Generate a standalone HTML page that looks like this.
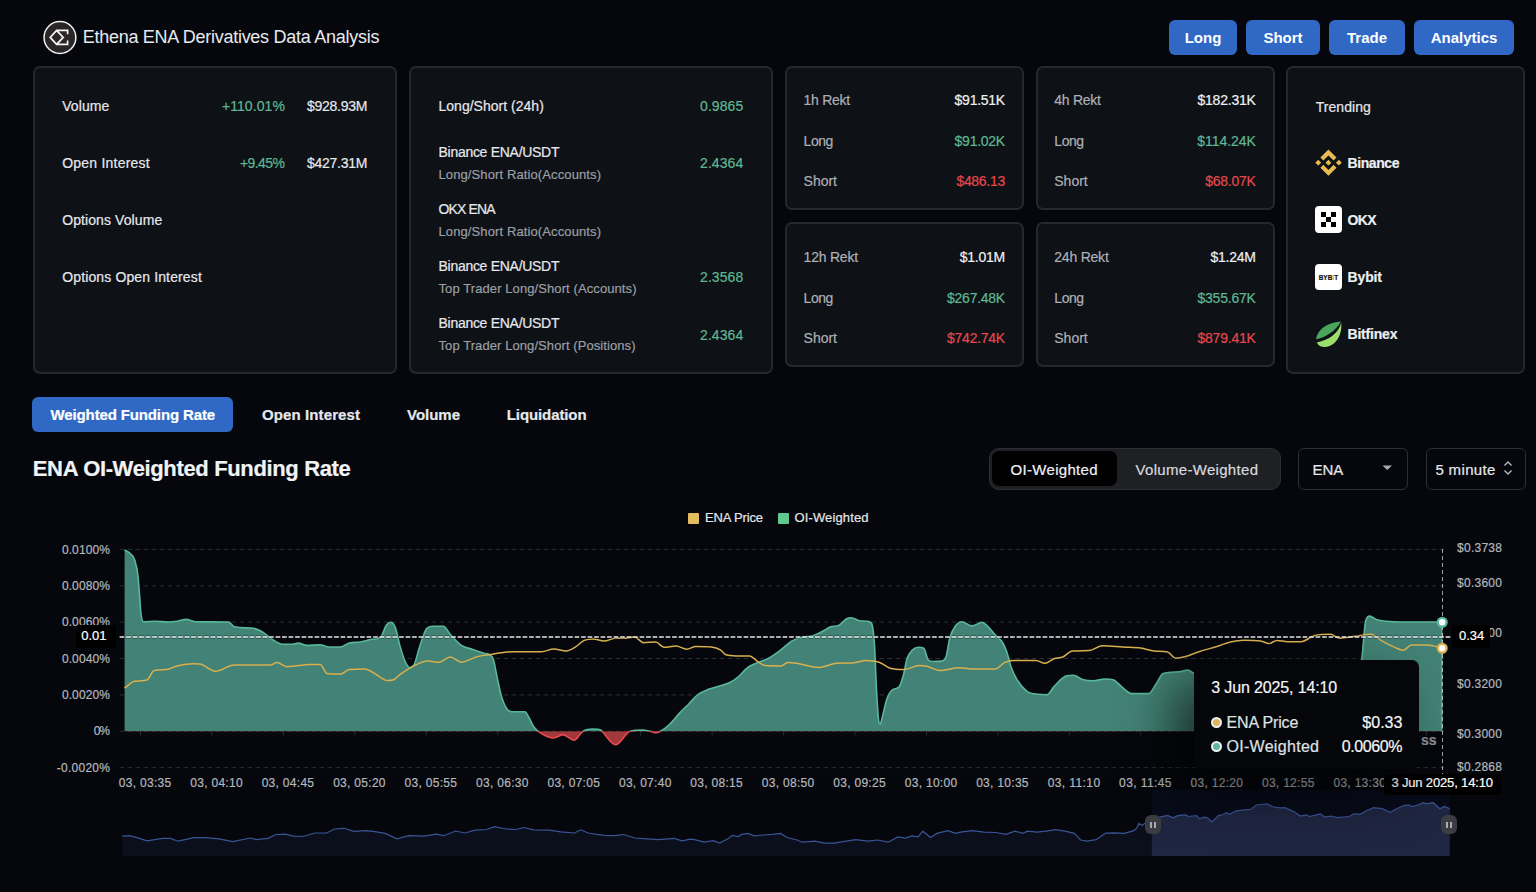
<!DOCTYPE html>
<html><head><meta charset="utf-8"><title>Ethena ENA Derivatives Data Analysis</title>
<style>
html,body{margin:0;padding:0;}
body{width:1536px;height:892px;background:#05070c;position:relative;overflow:hidden;font-family:"Liberation Sans", sans-serif;}
.t{position:absolute;white-space:nowrap;line-height:1;-webkit-text-stroke:0.2px currentColor;}
.card{position:absolute;background:#0e1116;border:2px solid #25282e;border-radius:7px;}
.btn{position:absolute;background:#3068c6;border-radius:6px;color:#fff;font-weight:700;font-size:15px;line-height:35px;text-align:center;}
</style></head><body>
<svg style="position:absolute;left:42px;top:20px" width="36" height="36" viewBox="0 0 36 36">
<circle cx="17.95" cy="17.5" r="15.9" fill="#2a2627" stroke="#f0f0f0" stroke-width="1.5"/>
<path d="M25.6 14.3 V10.4 H14.6 L8.2 17.4 L14.6 24.4 H25.6 V20.5 M14.6 10.4 L21.2 17.4 L14.6 24.4" fill="none" stroke="#f4f4f4" stroke-width="1.7" stroke-linejoin="miter"/>
</svg>
<div class="t" style="top:28.2px;font-size:18px;color:#e8eaef;letter-spacing:-0.270px;left:82.7px;-webkit-text-stroke:0;"><span>Ethena ENA Derivatives Data Analysis</span></div>
<div class="btn" style="left:1169px;top:20px;width:68px;height:35px;">Long</div>
<div class="btn" style="left:1246px;top:20px;width:74px;height:35px;">Short</div>
<div class="btn" style="left:1329px;top:20px;width:76px;height:35px;">Trade</div>
<div class="btn" style="left:1414px;top:20px;width:100px;height:35px;">Analytics</div>
<div class="card" style="left:33px;top:66px;width:360px;height:304px;"></div>
<div class="card" style="left:409px;top:66px;width:360px;height:304px;"></div>
<div class="card" style="left:785px;top:66px;width:235px;height:140px;"></div>
<div class="card" style="left:1036px;top:66px;width:235px;height:140px;"></div>
<div class="card" style="left:785px;top:222px;width:235px;height:141px;"></div>
<div class="card" style="left:1036px;top:222px;width:235px;height:141px;"></div>
<div class="card" style="left:1286px;top:66px;width:235px;height:304px;"></div>
<div class="t" style="top:98.9px;font-size:14px;color:#e6e8ec;letter-spacing:0.079px;left:62.2px;"><span>Volume</span></div>
<div class="t" style="top:155.9px;font-size:14px;color:#e6e8ec;letter-spacing:0.223px;left:62.2px;"><span>Open Interest</span></div>
<div class="t" style="top:212.9px;font-size:14px;color:#e6e8ec;letter-spacing:0.089px;left:62.2px;"><span>Options Volume</span></div>
<div class="t" style="top:269.7px;font-size:14px;color:#e6e8ec;letter-spacing:0.132px;left:62.2px;"><span>Options Open Interest</span></div>
<div class="t" style="top:98.9px;font-size:14px;color:#5fb893;letter-spacing:0.085px;right:1251.0px;text-align:right;"><span>+110.01%</span></div>
<div class="t" style="top:98.9px;font-size:14px;color:#e6e8ec;letter-spacing:-0.269px;right:1168.9px;text-align:right;"><span>$928.93M</span></div>
<div class="t" style="top:155.9px;font-size:14px;color:#5fb893;letter-spacing:-0.575px;right:1251.7px;text-align:right;"><span>+9.45%</span></div>
<div class="t" style="top:155.9px;font-size:14px;color:#e6e8ec;letter-spacing:-0.269px;right:1168.9px;text-align:right;"><span>$427.31M</span></div>
<div class="t" style="top:99.4px;font-size:14px;color:#e6e8ec;letter-spacing:0.015px;left:438.5px;"><span>Long/Short (24h)</span></div>
<div class="t" style="top:99.4px;font-size:14px;color:#5fb893;letter-spacing:0.074px;right:792.7px;text-align:right;"><span>0.9865</span></div>
<div class="t" style="top:145.0px;font-size:14px;color:#e6e8ec;letter-spacing:-0.285px;left:438.5px;"><span>Binance ENA/USDT</span></div>
<div class="t" style="top:168.0px;font-size:13px;color:#9c9fa4;letter-spacing:0.112px;left:438.5px;"><span>Long/Short Ratio(Accounts)</span></div>
<div class="t" style="top:156.1px;font-size:14px;color:#5fb893;letter-spacing:0.074px;right:792.7px;text-align:right;"><span>2.4364</span></div>
<div class="t" style="top:201.7px;font-size:14px;color:#e6e8ec;letter-spacing:-0.875px;left:438.5px;"><span>OKX ENA</span></div>
<div class="t" style="top:225.0px;font-size:13px;color:#9c9fa4;letter-spacing:0.112px;left:438.5px;"><span>Long/Short Ratio(Accounts)</span></div>
<div class="t" style="top:259.4px;font-size:14px;color:#e6e8ec;letter-spacing:-0.285px;left:438.5px;"><span>Binance ENA/USDT</span></div>
<div class="t" style="top:282.4px;font-size:13px;color:#9c9fa4;letter-spacing:0.093px;left:438.5px;"><span>Top Trader Long/Short (Accounts)</span></div>
<div class="t" style="top:270.3px;font-size:14px;color:#5fb893;letter-spacing:0.074px;right:792.7px;text-align:right;"><span>2.3568</span></div>
<div class="t" style="top:316.1px;font-size:14px;color:#e6e8ec;letter-spacing:-0.285px;left:438.5px;"><span>Binance ENA/USDT</span></div>
<div class="t" style="top:339.0px;font-size:13px;color:#9c9fa4;letter-spacing:0.082px;left:438.5px;"><span>Top Trader Long/Short (Positions)</span></div>
<div class="t" style="top:327.6px;font-size:14px;color:#5fb893;letter-spacing:0.074px;right:792.7px;text-align:right;"><span>2.4364</span></div>
<div class="t" style="top:92.8px;font-size:14px;color:#adb0b5;letter-spacing:-0.275px;left:803.6px;"><span>1h Rekt</span></div>
<div class="t" style="top:92.8px;font-size:14px;color:#f0f1f3;letter-spacing:-0.262px;right:531.1px;text-align:right;"><span>$91.51K</span></div>
<div class="t" style="top:133.6px;font-size:14px;color:#adb0b5;letter-spacing:-0.452px;left:803.6px;"><span>Long</span></div>
<div class="t" style="top:133.6px;font-size:14px;color:#5fb893;letter-spacing:-0.262px;right:531.1px;text-align:right;"><span>$91.02K</span></div>
<div class="t" style="top:174.3px;font-size:14px;color:#adb0b5;letter-spacing:-0.017px;left:803.6px;"><span>Short</span></div>
<div class="t" style="top:174.3px;font-size:14px;color:#e5484d;letter-spacing:-0.302px;right:531.1px;text-align:right;"><span>$486.13</span></div>
<div class="t" style="top:92.8px;font-size:14px;color:#adb0b5;letter-spacing:-0.275px;left:1054.3px;"><span>4h Rekt</span></div>
<div class="t" style="top:92.8px;font-size:14px;color:#f0f1f3;letter-spacing:-0.208px;right:280.3px;text-align:right;"><span>$182.31K</span></div>
<div class="t" style="top:133.6px;font-size:14px;color:#adb0b5;letter-spacing:-0.452px;left:1054.3px;"><span>Long</span></div>
<div class="t" style="top:133.6px;font-size:14px;color:#5fb893;letter-spacing:-0.058px;right:280.2px;text-align:right;"><span>$114.24K</span></div>
<div class="t" style="top:174.3px;font-size:14px;color:#adb0b5;letter-spacing:-0.017px;left:1054.3px;"><span>Short</span></div>
<div class="t" style="top:174.3px;font-size:14px;color:#e5484d;letter-spacing:-0.262px;right:280.4px;text-align:right;"><span>$68.07K</span></div>
<div class="t" style="top:249.9px;font-size:14px;color:#adb0b5;letter-spacing:-0.221px;left:803.6px;"><span>12h Rekt</span></div>
<div class="t" style="top:249.9px;font-size:14px;color:#f0f1f3;letter-spacing:-0.241px;right:531.0px;text-align:right;"><span>$1.01M</span></div>
<div class="t" style="top:290.7px;font-size:14px;color:#adb0b5;letter-spacing:-0.452px;left:803.6px;"><span>Long</span></div>
<div class="t" style="top:290.7px;font-size:14px;color:#5fb893;letter-spacing:-0.265px;right:531.1px;text-align:right;"><span>$267.48K</span></div>
<div class="t" style="top:331.4px;font-size:14px;color:#adb0b5;letter-spacing:-0.017px;left:803.6px;"><span>Short</span></div>
<div class="t" style="top:331.4px;font-size:14px;color:#e5484d;letter-spacing:-0.265px;right:531.1px;text-align:right;"><span>$742.74K</span></div>
<div class="t" style="top:249.9px;font-size:14px;color:#adb0b5;letter-spacing:-0.221px;left:1054.3px;"><span>24h Rekt</span></div>
<div class="t" style="top:249.9px;font-size:14px;color:#f0f1f3;letter-spacing:-0.241px;right:280.3px;text-align:right;"><span>$1.24M</span></div>
<div class="t" style="top:290.7px;font-size:14px;color:#adb0b5;letter-spacing:-0.452px;left:1054.3px;"><span>Long</span></div>
<div class="t" style="top:290.7px;font-size:14px;color:#5fb893;letter-spacing:-0.208px;right:280.3px;text-align:right;"><span>$355.67K</span></div>
<div class="t" style="top:331.4px;font-size:14px;color:#adb0b5;letter-spacing:-0.017px;left:1054.3px;"><span>Short</span></div>
<div class="t" style="top:331.4px;font-size:14px;color:#e5484d;letter-spacing:-0.208px;right:280.3px;text-align:right;"><span>$879.41K</span></div>
<div class="t" style="top:99.6px;font-size:14px;color:#e6e8ec;letter-spacing:0.064px;left:1315.7px;"><span>Trending</span></div>
<svg style="position:absolute;left:1310px;top:145px" width="40" height="36" viewBox="0 0 40 36">
<g fill="#e9bb4f">
<path d="M18.45 4.5 L26.5 12.56 L23.56 15.5 L18.45 10.4 L13.35 15.5 L10.4 12.56 Z"/>
<path d="M18.45 30.83 L26.5 22.77 L23.56 19.84 L18.45 24.94 L13.35 19.84 L10.4 22.77 Z"/>
<path d="M18.45 14.7 L21.4 17.67 L18.45 20.6 L15.5 17.67 Z"/>
<path d="M8.25 14.7 L11.2 17.67 L8.25 20.6 L5.3 17.67 Z"/>
<path d="M28.86 14.7 L31.8 17.67 L28.86 20.6 L25.9 17.67 Z"/>
</g></svg>
<div style="position:absolute;left:1315px;top:206px;width:27px;height:27px;background:#fff;border-radius:4px;"></div>
<svg style="position:absolute;left:1315px;top:206px" width="27" height="27" viewBox="0 0 27 27"><g fill="#000">
<rect x="6" y="6" width="5" height="5"/><rect x="16" y="6" width="5" height="5"/><rect x="11" y="11" width="5" height="5"/><rect x="6" y="16" width="5" height="5"/><rect x="16" y="16" width="5" height="5"/></g></svg>
<div style="position:absolute;left:1315px;top:263.5px;width:27px;height:26.5px;background:#fff;border-radius:4px;"></div>
<div class="t" style="left:1315px;top:275.4px;width:27px;text-align:center;font-size:6.4px;font-weight:700;color:#111;letter-spacing:0.1px">BYB<span style="color:#f7a600">I</span>T</div>
<svg style="position:absolute;left:1315px;top:320px" width="28" height="28" viewBox="0 0 28 28">
<path d="M25.9 1.4 C17 2 3.5 6 0.9 19.2 C10 17.5 21 11 25.9 1.4 Z" fill="#4aa65a"/>
<path d="M26.2 2.6 C24 13 14 20.5 1.9 22.4 C3 25.5 6.5 27.1 10.5 27 C20 26.5 27.5 16 26.2 2.6 Z" fill="#9ddd6c"/>
</svg>
<div class="t" style="top:156.1px;font-size:14px;color:#eceef1;font-weight:700;letter-spacing:-0.411px;left:1347.5px;"><span>Binance</span></div>
<div class="t" style="top:212.9px;font-size:14px;color:#eceef1;font-weight:700;letter-spacing:-0.672px;left:1347.5px;"><span>OKX</span></div>
<div class="t" style="top:270.1px;font-size:14px;color:#eceef1;font-weight:700;letter-spacing:-0.125px;left:1347.5px;"><span>Bybit</span></div>
<div class="t" style="top:327.1px;font-size:14px;color:#eceef1;font-weight:700;letter-spacing:-0.192px;left:1347.5px;"><span>Bitfinex</span></div>
<div style="position:absolute;left:32px;top:397px;width:201px;height:35px;background:#3068c6;border-radius:6px;"></div>
<div class="t" style="top:407.3px;font-size:15px;color:#fff;font-weight:700;letter-spacing:-0.136px;left:50.6px;"><span>Weighted Funding Rate</span></div>
<div class="t" style="top:407.3px;font-size:15px;color:#e6e8ec;font-weight:700;letter-spacing:0.109px;left:262.0px;"><span>Open Interest</span></div>
<div class="t" style="top:407.3px;font-size:15px;color:#e6e8ec;font-weight:700;letter-spacing:-0.016px;left:407.0px;"><span>Volume</span></div>
<div class="t" style="top:407.3px;font-size:15px;color:#e6e8ec;font-weight:700;letter-spacing:-0.103px;left:506.8px;"><span>Liquidation</span></div>
<div class="t" style="top:458.0px;font-size:22px;color:#f2f3f5;font-weight:700;letter-spacing:-0.354px;left:32.8px;"><span>ENA OI-Weighted Funding Rate</span></div>
<div style="position:absolute;left:989px;top:447.5px;width:290px;height:40px;background:#1e2024;border:1px solid #2c2e33;border-radius:10px;"></div>
<div style="position:absolute;left:992px;top:450.5px;width:125px;height:35.5px;background:#000;border-radius:7px;"></div>
<div style="position:absolute;left:1298px;top:447.5px;width:108px;height:40px;border:1px solid #2c2e33;border-radius:6px;"></div>
<div style="position:absolute;left:1426px;top:447.5px;width:98px;height:40px;border:1px solid #2c2e33;border-radius:6px;"></div>
<svg style="position:absolute;left:1382px;top:465px" width="11" height="6"><path d="M0.5 0.5 L10 0.5 L5.25 5 Z" fill="#a9abb0"/></svg>
<svg style="position:absolute;left:1503px;top:460px" width="10" height="16"><path d="M1.5 5.5 L5 2 L8.5 5.5 M1.5 10.5 L5 14 L8.5 10.5" fill="none" stroke="#b7b9bd" stroke-width="1.4"/></svg>
<div class="t" style="top:461.5px;font-size:15px;color:#eef0f2;letter-spacing:0.306px;left:1010.6px;"><span>OI-Weighted</span></div>
<div class="t" style="top:461.5px;font-size:15px;color:#d8dade;letter-spacing:0.312px;left:1135.5px;"><span>Volume-Weighted</span></div>
<div class="t" style="top:461.5px;font-size:15px;color:#e6e8ec;left:1312.5px;"><span>ENA</span></div>
<div class="t" style="top:461.5px;font-size:15px;color:#e6e8ec;letter-spacing:0.350px;left:1435.4px;"><span>5 minute</span></div>
<div style="position:absolute;left:688px;top:513px;width:11px;height:11px;background:#e3bc5c;border-radius:1px"></div>
<div style="position:absolute;left:777.7px;top:513px;width:11px;height:11px;background:#5ec88e;border-radius:1px"></div>
<div class="t" style="top:511.2px;font-size:13px;color:#e4e6ea;letter-spacing:-0.156px;left:705.1px;"><span>ENA Price</span></div>
<div class="t" style="top:511.2px;font-size:13px;color:#e4e6ea;letter-spacing:0.125px;left:794.5px;"><span>OI-Weighted</span></div>
<svg style="position:absolute;left:0;top:0" width="1536" height="892" viewBox="0 0 1536 892"><defs><clipPath id="cpos"><rect x="0" y="0" width="1536" height="731.3"/></clipPath><clipPath id="cneg"><rect x="0" y="731.3" width="1536" height="200"/></clipPath></defs><line x1="119.5" y1="549.4" x2="1447" y2="549.4" stroke="#2b2e34" stroke-width="1" stroke-dasharray="4.5 3.5"/><line x1="119.5" y1="585.8" x2="1447" y2="585.8" stroke="#2b2e34" stroke-width="1" stroke-dasharray="4.5 3.5"/><line x1="119.5" y1="622.1" x2="1447" y2="622.1" stroke="#2b2e34" stroke-width="1" stroke-dasharray="4.5 3.5"/><line x1="119.5" y1="658.5" x2="1447" y2="658.5" stroke="#2b2e34" stroke-width="1" stroke-dasharray="4.5 3.5"/><line x1="119.5" y1="694.9" x2="1447" y2="694.9" stroke="#2b2e34" stroke-width="1" stroke-dasharray="4.5 3.5"/><line x1="119.5" y1="731.3" x2="1447" y2="731.3" stroke="#2b2e34" stroke-width="1" stroke-dasharray="4.5 3.5"/><line x1="119.5" y1="767.6" x2="1447" y2="767.6" stroke="#2b2e34" stroke-width="1" stroke-dasharray="4.5 3.5"/><line x1="140.5" y1="731" x2="140.5" y2="735.5" stroke="#2a2d33" stroke-width="1"/><line x1="211.9" y1="731" x2="211.9" y2="735.5" stroke="#2a2d33" stroke-width="1"/><line x1="283.4" y1="731" x2="283.4" y2="735.5" stroke="#2a2d33" stroke-width="1"/><line x1="354.9" y1="731" x2="354.9" y2="735.5" stroke="#2a2d33" stroke-width="1"/><line x1="426.3" y1="731" x2="426.3" y2="735.5" stroke="#2a2d33" stroke-width="1"/><line x1="497.8" y1="731" x2="497.8" y2="735.5" stroke="#2a2d33" stroke-width="1"/><line x1="569.2" y1="731" x2="569.2" y2="735.5" stroke="#2a2d33" stroke-width="1"/><line x1="640.7" y1="731" x2="640.7" y2="735.5" stroke="#2a2d33" stroke-width="1"/><line x1="712.1" y1="731" x2="712.1" y2="735.5" stroke="#2a2d33" stroke-width="1"/><line x1="783.6" y1="731" x2="783.6" y2="735.5" stroke="#2a2d33" stroke-width="1"/><line x1="855.0" y1="731" x2="855.0" y2="735.5" stroke="#2a2d33" stroke-width="1"/><line x1="926.5" y1="731" x2="926.5" y2="735.5" stroke="#2a2d33" stroke-width="1"/><line x1="997.9" y1="731" x2="997.9" y2="735.5" stroke="#2a2d33" stroke-width="1"/><line x1="1069.3" y1="731" x2="1069.3" y2="735.5" stroke="#2a2d33" stroke-width="1"/><line x1="1140.8" y1="731" x2="1140.8" y2="735.5" stroke="#2a2d33" stroke-width="1"/><line x1="1212.2" y1="731" x2="1212.2" y2="735.5" stroke="#2a2d33" stroke-width="1"/><line x1="1283.7" y1="731" x2="1283.7" y2="735.5" stroke="#2a2d33" stroke-width="1"/><line x1="1355.2" y1="731" x2="1355.2" y2="735.5" stroke="#2a2d33" stroke-width="1"/><line x1="1426.6" y1="731" x2="1426.6" y2="735.5" stroke="#2a2d33" stroke-width="1"/><g clip-path="url(#cpos)"><path d="M124.6 550.0 C126.5 551.2 128.3 551.6 130.2 553.5 C131.7 555.1 133.2 555.3 134.7 560.0 C135.8 563.5 136.9 566.5 138.0 576.0 C138.5 580.6 139.1 589.2 139.6 596.0 C140.1 601.9 140.5 610.3 141.0 614.0 C141.9 620.9 142.7 621.8 143.6 621.8 C147.3 621.8 151.1 621.2 154.8 621.2 C159.3 621.2 163.8 622.0 168.3 622.0 C171.3 622.0 174.3 621.6 177.3 621.2 C180.3 620.8 183.2 619.4 186.2 619.4 C189.2 619.4 192.2 621.8 195.2 621.8 C206.4 621.9 217.6 621.8 228.8 622.0 C230.7 622.0 232.5 626.4 234.4 626.8 C240.8 628.1 247.1 627.6 253.5 628.3 C256.5 628.6 259.5 630.3 262.5 632.0 C265.5 633.7 268.4 636.8 271.4 638.7 C275.1 641.0 278.9 644.3 282.6 644.3 C285.6 644.3 288.6 644.3 291.6 644.3 C293.8 644.3 296.1 643.1 298.3 643.1 C301.1 643.1 303.9 645.4 306.7 645.4 C311.2 645.4 315.7 644.9 320.2 644.9 C323.2 644.9 326.1 647.0 329.1 647.0 C332.9 647.0 336.6 647.0 340.4 647.0 C343.4 647.0 346.3 643.8 349.3 643.1 C353.0 642.2 356.8 642.6 360.5 642.0 C364.2 641.4 368.0 639.8 371.7 639.3 C374.7 638.9 377.7 639.3 380.7 637.1 C382.6 635.8 384.4 627.8 386.3 625.2 C387.8 623.1 389.3 622.3 390.8 622.3 C392.3 622.3 393.8 623.5 395.3 627.4 C396.8 631.2 398.3 640.1 399.8 645.4 C401.7 651.9 403.5 658.2 405.4 662.2 C406.9 665.4 408.4 667.8 409.9 667.8 C411.4 667.8 412.8 667.4 414.3 664.4 C416.2 660.5 418.1 650.9 420.0 645.4 C422.2 638.9 424.5 631.4 426.7 628.6 C428.6 626.3 430.4 626.3 432.3 626.3 C436.0 626.3 439.8 626.3 443.5 626.3 C445.7 626.3 448.0 631.8 450.2 634.2 C453.9 638.3 457.7 642.9 461.4 645.4 C465.1 647.9 468.9 648.1 472.6 649.4 C476.4 650.7 480.1 652.0 483.9 653.2 C485.9 653.8 488.0 653.4 490.0 655.0 C491.1 655.9 492.3 656.1 493.4 659.5 C494.5 662.8 495.6 670.1 496.7 675.2 C498.2 682.1 499.7 690.2 501.2 695.4 C503.1 701.8 504.9 706.0 506.8 708.8 C508.3 711.1 509.8 711.7 511.3 711.7 C515.8 711.7 520.3 711.7 524.8 711.7 C526.3 711.7 527.7 715.3 529.2 717.8 C530.7 720.3 532.2 724.5 533.7 726.8 C535.2 729.0 536.7 730.2 538.2 731.3 C543.4 735.0 548.7 738.0 553.9 738.0 C556.9 738.0 559.9 734.6 562.9 734.6 C566.6 734.6 570.4 740.2 574.1 740.2 C576.3 740.2 578.6 735.7 580.8 733.5 C581.5 732.8 582.3 731.8 583.0 731.3 C586.4 729.2 589.7 729.0 593.1 729.0 C595.7 729.0 598.4 729.0 601.0 730.1 C601.4 730.3 601.7 730.9 602.1 731.3 C606.6 736.0 611.1 744.7 615.6 744.7 C620.4 744.7 625.3 732.7 630.1 731.3 C634.2 730.1 638.4 730.1 642.5 730.1 C645.1 730.1 647.7 730.8 650.3 731.3 C652.2 731.7 654.0 732.8 655.9 732.8 C657.4 732.8 658.9 732.1 660.4 731.3 C663.4 729.7 666.4 727.3 669.4 724.5 C672.9 721.2 676.5 716.3 680.0 712.6 C683.0 709.4 686.0 706.7 689.0 703.7 C692.0 700.7 694.9 696.9 697.9 694.7 C701.6 691.9 705.4 690.6 709.1 689.1 C712.9 687.6 716.6 686.9 720.4 685.7 C723.4 684.8 726.3 684.3 729.3 682.8 C732.3 681.3 735.3 679.3 738.3 676.8 C741.3 674.3 744.3 670.1 747.3 667.8 C750.3 665.6 753.2 664.7 756.2 663.3 C760.7 661.2 765.2 660.2 769.7 657.7 C773.4 655.6 777.2 652.7 780.9 649.9 C784.6 647.1 788.4 643.1 792.1 640.9 C795.1 639.1 798.1 638.3 801.1 637.5 C805.6 636.3 810.0 636.8 814.5 635.3 C817.5 634.3 820.5 632.4 823.5 630.8 C825.7 629.6 828.0 627.8 830.2 627.0 C833.2 625.9 836.2 626.7 839.2 625.2 C841.8 623.9 844.4 619.7 847.0 618.5 C848.5 617.8 850.0 617.8 851.5 617.8 C854.1 617.8 856.8 620.4 859.4 620.7 C862.8 621.1 866.1 621.0 869.5 621.8 C870.4 622.0 871.3 621.8 872.2 625.2 C873.0 628.1 873.7 633.5 874.5 645.4 C875.1 654.8 875.7 674.4 876.3 685.7 C877.0 699.5 877.8 712.7 878.5 719.4 C879.0 724.3 879.6 724.3 880.1 724.3 C880.8 724.3 881.6 719.8 882.3 717.1 C883.8 711.7 885.3 703.4 886.8 699.2 C888.7 693.9 890.5 691.1 892.4 689.8 C894.6 688.2 896.9 689.3 899.1 686.9 C900.6 685.3 902.1 680.0 903.6 674.5 C904.7 670.3 905.9 662.3 907.0 658.8 C908.9 653.0 910.7 651.8 912.6 649.9 C914.5 648.0 916.3 647.2 918.2 647.2 C920.1 647.2 921.9 647.2 923.8 648.3 C925.3 649.2 926.8 658.5 928.3 660.0 C929.8 661.5 931.3 661.5 932.8 661.5 C935.8 661.5 938.7 661.5 941.7 661.1 C943.2 660.9 944.7 661.1 946.2 656.6 C947.3 653.2 948.5 642.9 949.6 638.7 C951.5 631.7 953.3 629.0 955.2 626.3 C957.4 623.1 959.7 621.8 961.9 621.8 C965.3 621.8 968.6 625.9 972.0 625.9 C975.4 625.9 978.7 622.3 982.1 622.3 C984.0 622.3 985.8 624.6 987.7 626.3 C990.3 628.7 993.0 632.5 995.6 635.3 C997.8 637.7 1000.1 638.4 1002.3 642.0 C1003.8 644.4 1005.3 647.8 1006.8 652.1 C1008.3 656.4 1009.8 663.7 1011.3 667.8 C1013.5 673.9 1015.8 677.8 1018.0 681.3 C1021.0 686.0 1024.0 689.2 1027.0 691.3 C1030.7 693.9 1034.5 693.8 1038.2 694.3 C1041.2 694.7 1044.1 694.7 1047.1 694.7 C1049.4 694.7 1051.6 689.3 1053.9 686.9 C1056.9 683.7 1059.8 680.2 1062.8 677.9 C1064.1 676.9 1065.4 676.0 1066.7 675.7 C1069.0 675.2 1071.2 675.2 1073.5 675.2 C1076.5 675.2 1079.4 678.6 1082.4 679.5 C1086.1 680.6 1089.9 680.8 1093.6 680.8 C1097.3 680.8 1101.1 679.0 1104.8 679.0 C1107.8 679.0 1110.8 679.0 1113.8 680.1 C1116.0 680.9 1118.3 684.0 1120.5 685.7 C1124.2 688.6 1128.0 693.6 1131.7 693.6 C1137.3 693.6 1143.0 693.6 1148.6 693.6 C1151.2 693.6 1153.8 687.1 1156.4 683.5 C1158.6 680.4 1160.9 674.1 1163.1 673.4 C1168.3 671.8 1173.6 672.1 1178.8 671.8 C1181.8 671.6 1184.8 670.0 1187.8 670.0 C1189.7 670.0 1191.5 672.3 1193.4 673.0 C1205.6 677.4 1217.8 680.0 1230.0 680.0 C1253.3 680.0 1276.7 680.0 1300.0 680.0 C1318.3 680.0 1336.7 679.6 1355.0 672.0 C1357.2 671.1 1359.4 672.0 1361.6 660.0 C1363.0 652.6 1364.3 625.4 1365.7 620.7 C1367.0 616.1 1368.4 616.1 1369.7 616.1 C1371.9 616.1 1374.2 618.7 1376.4 619.4 C1380.9 620.9 1385.4 621.2 1389.9 621.5 C1397.1 622.0 1404.2 622.0 1411.4 622.0 C1419.5 622.0 1427.5 622.0 1435.6 622.0 C1437.7 622.0 1439.7 622.0 1441.8 622.0 L1441.8 731.3 L124.6 731.3 Z" fill="#438276"/><path d="M124.6 550.0 C126.5 551.2 128.3 551.6 130.2 553.5 C131.7 555.1 133.2 555.3 134.7 560.0 C135.8 563.5 136.9 566.5 138.0 576.0 C138.5 580.6 139.1 589.2 139.6 596.0 C140.1 601.9 140.5 610.3 141.0 614.0 C141.9 620.9 142.7 621.8 143.6 621.8 C147.3 621.8 151.1 621.2 154.8 621.2 C159.3 621.2 163.8 622.0 168.3 622.0 C171.3 622.0 174.3 621.6 177.3 621.2 C180.3 620.8 183.2 619.4 186.2 619.4 C189.2 619.4 192.2 621.8 195.2 621.8 C206.4 621.9 217.6 621.8 228.8 622.0 C230.7 622.0 232.5 626.4 234.4 626.8 C240.8 628.1 247.1 627.6 253.5 628.3 C256.5 628.6 259.5 630.3 262.5 632.0 C265.5 633.7 268.4 636.8 271.4 638.7 C275.1 641.0 278.9 644.3 282.6 644.3 C285.6 644.3 288.6 644.3 291.6 644.3 C293.8 644.3 296.1 643.1 298.3 643.1 C301.1 643.1 303.9 645.4 306.7 645.4 C311.2 645.4 315.7 644.9 320.2 644.9 C323.2 644.9 326.1 647.0 329.1 647.0 C332.9 647.0 336.6 647.0 340.4 647.0 C343.4 647.0 346.3 643.8 349.3 643.1 C353.0 642.2 356.8 642.6 360.5 642.0 C364.2 641.4 368.0 639.8 371.7 639.3 C374.7 638.9 377.7 639.3 380.7 637.1 C382.6 635.8 384.4 627.8 386.3 625.2 C387.8 623.1 389.3 622.3 390.8 622.3 C392.3 622.3 393.8 623.5 395.3 627.4 C396.8 631.2 398.3 640.1 399.8 645.4 C401.7 651.9 403.5 658.2 405.4 662.2 C406.9 665.4 408.4 667.8 409.9 667.8 C411.4 667.8 412.8 667.4 414.3 664.4 C416.2 660.5 418.1 650.9 420.0 645.4 C422.2 638.9 424.5 631.4 426.7 628.6 C428.6 626.3 430.4 626.3 432.3 626.3 C436.0 626.3 439.8 626.3 443.5 626.3 C445.7 626.3 448.0 631.8 450.2 634.2 C453.9 638.3 457.7 642.9 461.4 645.4 C465.1 647.9 468.9 648.1 472.6 649.4 C476.4 650.7 480.1 652.0 483.9 653.2 C485.9 653.8 488.0 653.4 490.0 655.0 C491.1 655.9 492.3 656.1 493.4 659.5 C494.5 662.8 495.6 670.1 496.7 675.2 C498.2 682.1 499.7 690.2 501.2 695.4 C503.1 701.8 504.9 706.0 506.8 708.8 C508.3 711.1 509.8 711.7 511.3 711.7 C515.8 711.7 520.3 711.7 524.8 711.7 C526.3 711.7 527.7 715.3 529.2 717.8 C530.7 720.3 532.2 724.5 533.7 726.8 C535.2 729.0 536.7 730.2 538.2 731.3 C543.4 735.0 548.7 738.0 553.9 738.0 C556.9 738.0 559.9 734.6 562.9 734.6 C566.6 734.6 570.4 740.2 574.1 740.2 C576.3 740.2 578.6 735.7 580.8 733.5 C581.5 732.8 582.3 731.8 583.0 731.3 C586.4 729.2 589.7 729.0 593.1 729.0 C595.7 729.0 598.4 729.0 601.0 730.1 C601.4 730.3 601.7 730.9 602.1 731.3 C606.6 736.0 611.1 744.7 615.6 744.7 C620.4 744.7 625.3 732.7 630.1 731.3 C634.2 730.1 638.4 730.1 642.5 730.1 C645.1 730.1 647.7 730.8 650.3 731.3 C652.2 731.7 654.0 732.8 655.9 732.8 C657.4 732.8 658.9 732.1 660.4 731.3 C663.4 729.7 666.4 727.3 669.4 724.5 C672.9 721.2 676.5 716.3 680.0 712.6 C683.0 709.4 686.0 706.7 689.0 703.7 C692.0 700.7 694.9 696.9 697.9 694.7 C701.6 691.9 705.4 690.6 709.1 689.1 C712.9 687.6 716.6 686.9 720.4 685.7 C723.4 684.8 726.3 684.3 729.3 682.8 C732.3 681.3 735.3 679.3 738.3 676.8 C741.3 674.3 744.3 670.1 747.3 667.8 C750.3 665.6 753.2 664.7 756.2 663.3 C760.7 661.2 765.2 660.2 769.7 657.7 C773.4 655.6 777.2 652.7 780.9 649.9 C784.6 647.1 788.4 643.1 792.1 640.9 C795.1 639.1 798.1 638.3 801.1 637.5 C805.6 636.3 810.0 636.8 814.5 635.3 C817.5 634.3 820.5 632.4 823.5 630.8 C825.7 629.6 828.0 627.8 830.2 627.0 C833.2 625.9 836.2 626.7 839.2 625.2 C841.8 623.9 844.4 619.7 847.0 618.5 C848.5 617.8 850.0 617.8 851.5 617.8 C854.1 617.8 856.8 620.4 859.4 620.7 C862.8 621.1 866.1 621.0 869.5 621.8 C870.4 622.0 871.3 621.8 872.2 625.2 C873.0 628.1 873.7 633.5 874.5 645.4 C875.1 654.8 875.7 674.4 876.3 685.7 C877.0 699.5 877.8 712.7 878.5 719.4 C879.0 724.3 879.6 724.3 880.1 724.3 C880.8 724.3 881.6 719.8 882.3 717.1 C883.8 711.7 885.3 703.4 886.8 699.2 C888.7 693.9 890.5 691.1 892.4 689.8 C894.6 688.2 896.9 689.3 899.1 686.9 C900.6 685.3 902.1 680.0 903.6 674.5 C904.7 670.3 905.9 662.3 907.0 658.8 C908.9 653.0 910.7 651.8 912.6 649.9 C914.5 648.0 916.3 647.2 918.2 647.2 C920.1 647.2 921.9 647.2 923.8 648.3 C925.3 649.2 926.8 658.5 928.3 660.0 C929.8 661.5 931.3 661.5 932.8 661.5 C935.8 661.5 938.7 661.5 941.7 661.1 C943.2 660.9 944.7 661.1 946.2 656.6 C947.3 653.2 948.5 642.9 949.6 638.7 C951.5 631.7 953.3 629.0 955.2 626.3 C957.4 623.1 959.7 621.8 961.9 621.8 C965.3 621.8 968.6 625.9 972.0 625.9 C975.4 625.9 978.7 622.3 982.1 622.3 C984.0 622.3 985.8 624.6 987.7 626.3 C990.3 628.7 993.0 632.5 995.6 635.3 C997.8 637.7 1000.1 638.4 1002.3 642.0 C1003.8 644.4 1005.3 647.8 1006.8 652.1 C1008.3 656.4 1009.8 663.7 1011.3 667.8 C1013.5 673.9 1015.8 677.8 1018.0 681.3 C1021.0 686.0 1024.0 689.2 1027.0 691.3 C1030.7 693.9 1034.5 693.8 1038.2 694.3 C1041.2 694.7 1044.1 694.7 1047.1 694.7 C1049.4 694.7 1051.6 689.3 1053.9 686.9 C1056.9 683.7 1059.8 680.2 1062.8 677.9 C1064.1 676.9 1065.4 676.0 1066.7 675.7 C1069.0 675.2 1071.2 675.2 1073.5 675.2 C1076.5 675.2 1079.4 678.6 1082.4 679.5 C1086.1 680.6 1089.9 680.8 1093.6 680.8 C1097.3 680.8 1101.1 679.0 1104.8 679.0 C1107.8 679.0 1110.8 679.0 1113.8 680.1 C1116.0 680.9 1118.3 684.0 1120.5 685.7 C1124.2 688.6 1128.0 693.6 1131.7 693.6 C1137.3 693.6 1143.0 693.6 1148.6 693.6 C1151.2 693.6 1153.8 687.1 1156.4 683.5 C1158.6 680.4 1160.9 674.1 1163.1 673.4 C1168.3 671.8 1173.6 672.1 1178.8 671.8 C1181.8 671.6 1184.8 670.0 1187.8 670.0 C1189.7 670.0 1191.5 672.3 1193.4 673.0 C1205.6 677.4 1217.8 680.0 1230.0 680.0 C1253.3 680.0 1276.7 680.0 1300.0 680.0 C1318.3 680.0 1336.7 679.6 1355.0 672.0 C1357.2 671.1 1359.4 672.0 1361.6 660.0 C1363.0 652.6 1364.3 625.4 1365.7 620.7 C1367.0 616.1 1368.4 616.1 1369.7 616.1 C1371.9 616.1 1374.2 618.7 1376.4 619.4 C1380.9 620.9 1385.4 621.2 1389.9 621.5 C1397.1 622.0 1404.2 622.0 1411.4 622.0 C1419.5 622.0 1427.5 622.0 1435.6 622.0 C1437.7 622.0 1439.7 622.0 1441.8 622.0" fill="none" stroke="#58b89c" stroke-width="1.6"/></g><g clip-path="url(#cneg)"><path d="M124.6 550.0 C126.5 551.2 128.3 551.6 130.2 553.5 C131.7 555.1 133.2 555.3 134.7 560.0 C135.8 563.5 136.9 566.5 138.0 576.0 C138.5 580.6 139.1 589.2 139.6 596.0 C140.1 601.9 140.5 610.3 141.0 614.0 C141.9 620.9 142.7 621.8 143.6 621.8 C147.3 621.8 151.1 621.2 154.8 621.2 C159.3 621.2 163.8 622.0 168.3 622.0 C171.3 622.0 174.3 621.6 177.3 621.2 C180.3 620.8 183.2 619.4 186.2 619.4 C189.2 619.4 192.2 621.8 195.2 621.8 C206.4 621.9 217.6 621.8 228.8 622.0 C230.7 622.0 232.5 626.4 234.4 626.8 C240.8 628.1 247.1 627.6 253.5 628.3 C256.5 628.6 259.5 630.3 262.5 632.0 C265.5 633.7 268.4 636.8 271.4 638.7 C275.1 641.0 278.9 644.3 282.6 644.3 C285.6 644.3 288.6 644.3 291.6 644.3 C293.8 644.3 296.1 643.1 298.3 643.1 C301.1 643.1 303.9 645.4 306.7 645.4 C311.2 645.4 315.7 644.9 320.2 644.9 C323.2 644.9 326.1 647.0 329.1 647.0 C332.9 647.0 336.6 647.0 340.4 647.0 C343.4 647.0 346.3 643.8 349.3 643.1 C353.0 642.2 356.8 642.6 360.5 642.0 C364.2 641.4 368.0 639.8 371.7 639.3 C374.7 638.9 377.7 639.3 380.7 637.1 C382.6 635.8 384.4 627.8 386.3 625.2 C387.8 623.1 389.3 622.3 390.8 622.3 C392.3 622.3 393.8 623.5 395.3 627.4 C396.8 631.2 398.3 640.1 399.8 645.4 C401.7 651.9 403.5 658.2 405.4 662.2 C406.9 665.4 408.4 667.8 409.9 667.8 C411.4 667.8 412.8 667.4 414.3 664.4 C416.2 660.5 418.1 650.9 420.0 645.4 C422.2 638.9 424.5 631.4 426.7 628.6 C428.6 626.3 430.4 626.3 432.3 626.3 C436.0 626.3 439.8 626.3 443.5 626.3 C445.7 626.3 448.0 631.8 450.2 634.2 C453.9 638.3 457.7 642.9 461.4 645.4 C465.1 647.9 468.9 648.1 472.6 649.4 C476.4 650.7 480.1 652.0 483.9 653.2 C485.9 653.8 488.0 653.4 490.0 655.0 C491.1 655.9 492.3 656.1 493.4 659.5 C494.5 662.8 495.6 670.1 496.7 675.2 C498.2 682.1 499.7 690.2 501.2 695.4 C503.1 701.8 504.9 706.0 506.8 708.8 C508.3 711.1 509.8 711.7 511.3 711.7 C515.8 711.7 520.3 711.7 524.8 711.7 C526.3 711.7 527.7 715.3 529.2 717.8 C530.7 720.3 532.2 724.5 533.7 726.8 C535.2 729.0 536.7 730.2 538.2 731.3 C543.4 735.0 548.7 738.0 553.9 738.0 C556.9 738.0 559.9 734.6 562.9 734.6 C566.6 734.6 570.4 740.2 574.1 740.2 C576.3 740.2 578.6 735.7 580.8 733.5 C581.5 732.8 582.3 731.8 583.0 731.3 C586.4 729.2 589.7 729.0 593.1 729.0 C595.7 729.0 598.4 729.0 601.0 730.1 C601.4 730.3 601.7 730.9 602.1 731.3 C606.6 736.0 611.1 744.7 615.6 744.7 C620.4 744.7 625.3 732.7 630.1 731.3 C634.2 730.1 638.4 730.1 642.5 730.1 C645.1 730.1 647.7 730.8 650.3 731.3 C652.2 731.7 654.0 732.8 655.9 732.8 C657.4 732.8 658.9 732.1 660.4 731.3 C663.4 729.7 666.4 727.3 669.4 724.5 C672.9 721.2 676.5 716.3 680.0 712.6 C683.0 709.4 686.0 706.7 689.0 703.7 C692.0 700.7 694.9 696.9 697.9 694.7 C701.6 691.9 705.4 690.6 709.1 689.1 C712.9 687.6 716.6 686.9 720.4 685.7 C723.4 684.8 726.3 684.3 729.3 682.8 C732.3 681.3 735.3 679.3 738.3 676.8 C741.3 674.3 744.3 670.1 747.3 667.8 C750.3 665.6 753.2 664.7 756.2 663.3 C760.7 661.2 765.2 660.2 769.7 657.7 C773.4 655.6 777.2 652.7 780.9 649.9 C784.6 647.1 788.4 643.1 792.1 640.9 C795.1 639.1 798.1 638.3 801.1 637.5 C805.6 636.3 810.0 636.8 814.5 635.3 C817.5 634.3 820.5 632.4 823.5 630.8 C825.7 629.6 828.0 627.8 830.2 627.0 C833.2 625.9 836.2 626.7 839.2 625.2 C841.8 623.9 844.4 619.7 847.0 618.5 C848.5 617.8 850.0 617.8 851.5 617.8 C854.1 617.8 856.8 620.4 859.4 620.7 C862.8 621.1 866.1 621.0 869.5 621.8 C870.4 622.0 871.3 621.8 872.2 625.2 C873.0 628.1 873.7 633.5 874.5 645.4 C875.1 654.8 875.7 674.4 876.3 685.7 C877.0 699.5 877.8 712.7 878.5 719.4 C879.0 724.3 879.6 724.3 880.1 724.3 C880.8 724.3 881.6 719.8 882.3 717.1 C883.8 711.7 885.3 703.4 886.8 699.2 C888.7 693.9 890.5 691.1 892.4 689.8 C894.6 688.2 896.9 689.3 899.1 686.9 C900.6 685.3 902.1 680.0 903.6 674.5 C904.7 670.3 905.9 662.3 907.0 658.8 C908.9 653.0 910.7 651.8 912.6 649.9 C914.5 648.0 916.3 647.2 918.2 647.2 C920.1 647.2 921.9 647.2 923.8 648.3 C925.3 649.2 926.8 658.5 928.3 660.0 C929.8 661.5 931.3 661.5 932.8 661.5 C935.8 661.5 938.7 661.5 941.7 661.1 C943.2 660.9 944.7 661.1 946.2 656.6 C947.3 653.2 948.5 642.9 949.6 638.7 C951.5 631.7 953.3 629.0 955.2 626.3 C957.4 623.1 959.7 621.8 961.9 621.8 C965.3 621.8 968.6 625.9 972.0 625.9 C975.4 625.9 978.7 622.3 982.1 622.3 C984.0 622.3 985.8 624.6 987.7 626.3 C990.3 628.7 993.0 632.5 995.6 635.3 C997.8 637.7 1000.1 638.4 1002.3 642.0 C1003.8 644.4 1005.3 647.8 1006.8 652.1 C1008.3 656.4 1009.8 663.7 1011.3 667.8 C1013.5 673.9 1015.8 677.8 1018.0 681.3 C1021.0 686.0 1024.0 689.2 1027.0 691.3 C1030.7 693.9 1034.5 693.8 1038.2 694.3 C1041.2 694.7 1044.1 694.7 1047.1 694.7 C1049.4 694.7 1051.6 689.3 1053.9 686.9 C1056.9 683.7 1059.8 680.2 1062.8 677.9 C1064.1 676.9 1065.4 676.0 1066.7 675.7 C1069.0 675.2 1071.2 675.2 1073.5 675.2 C1076.5 675.2 1079.4 678.6 1082.4 679.5 C1086.1 680.6 1089.9 680.8 1093.6 680.8 C1097.3 680.8 1101.1 679.0 1104.8 679.0 C1107.8 679.0 1110.8 679.0 1113.8 680.1 C1116.0 680.9 1118.3 684.0 1120.5 685.7 C1124.2 688.6 1128.0 693.6 1131.7 693.6 C1137.3 693.6 1143.0 693.6 1148.6 693.6 C1151.2 693.6 1153.8 687.1 1156.4 683.5 C1158.6 680.4 1160.9 674.1 1163.1 673.4 C1168.3 671.8 1173.6 672.1 1178.8 671.8 C1181.8 671.6 1184.8 670.0 1187.8 670.0 C1189.7 670.0 1191.5 672.3 1193.4 673.0 C1205.6 677.4 1217.8 680.0 1230.0 680.0 C1253.3 680.0 1276.7 680.0 1300.0 680.0 C1318.3 680.0 1336.7 679.6 1355.0 672.0 C1357.2 671.1 1359.4 672.0 1361.6 660.0 C1363.0 652.6 1364.3 625.4 1365.7 620.7 C1367.0 616.1 1368.4 616.1 1369.7 616.1 C1371.9 616.1 1374.2 618.7 1376.4 619.4 C1380.9 620.9 1385.4 621.2 1389.9 621.5 C1397.1 622.0 1404.2 622.0 1411.4 622.0 C1419.5 622.0 1427.5 622.0 1435.6 622.0 C1437.7 622.0 1439.7 622.0 1441.8 622.0 L1441.8 731.3 L124.6 731.3 Z" fill="#a3383b"/><path d="M124.6 550.0 C126.5 551.2 128.3 551.6 130.2 553.5 C131.7 555.1 133.2 555.3 134.7 560.0 C135.8 563.5 136.9 566.5 138.0 576.0 C138.5 580.6 139.1 589.2 139.6 596.0 C140.1 601.9 140.5 610.3 141.0 614.0 C141.9 620.9 142.7 621.8 143.6 621.8 C147.3 621.8 151.1 621.2 154.8 621.2 C159.3 621.2 163.8 622.0 168.3 622.0 C171.3 622.0 174.3 621.6 177.3 621.2 C180.3 620.8 183.2 619.4 186.2 619.4 C189.2 619.4 192.2 621.8 195.2 621.8 C206.4 621.9 217.6 621.8 228.8 622.0 C230.7 622.0 232.5 626.4 234.4 626.8 C240.8 628.1 247.1 627.6 253.5 628.3 C256.5 628.6 259.5 630.3 262.5 632.0 C265.5 633.7 268.4 636.8 271.4 638.7 C275.1 641.0 278.9 644.3 282.6 644.3 C285.6 644.3 288.6 644.3 291.6 644.3 C293.8 644.3 296.1 643.1 298.3 643.1 C301.1 643.1 303.9 645.4 306.7 645.4 C311.2 645.4 315.7 644.9 320.2 644.9 C323.2 644.9 326.1 647.0 329.1 647.0 C332.9 647.0 336.6 647.0 340.4 647.0 C343.4 647.0 346.3 643.8 349.3 643.1 C353.0 642.2 356.8 642.6 360.5 642.0 C364.2 641.4 368.0 639.8 371.7 639.3 C374.7 638.9 377.7 639.3 380.7 637.1 C382.6 635.8 384.4 627.8 386.3 625.2 C387.8 623.1 389.3 622.3 390.8 622.3 C392.3 622.3 393.8 623.5 395.3 627.4 C396.8 631.2 398.3 640.1 399.8 645.4 C401.7 651.9 403.5 658.2 405.4 662.2 C406.9 665.4 408.4 667.8 409.9 667.8 C411.4 667.8 412.8 667.4 414.3 664.4 C416.2 660.5 418.1 650.9 420.0 645.4 C422.2 638.9 424.5 631.4 426.7 628.6 C428.6 626.3 430.4 626.3 432.3 626.3 C436.0 626.3 439.8 626.3 443.5 626.3 C445.7 626.3 448.0 631.8 450.2 634.2 C453.9 638.3 457.7 642.9 461.4 645.4 C465.1 647.9 468.9 648.1 472.6 649.4 C476.4 650.7 480.1 652.0 483.9 653.2 C485.9 653.8 488.0 653.4 490.0 655.0 C491.1 655.9 492.3 656.1 493.4 659.5 C494.5 662.8 495.6 670.1 496.7 675.2 C498.2 682.1 499.7 690.2 501.2 695.4 C503.1 701.8 504.9 706.0 506.8 708.8 C508.3 711.1 509.8 711.7 511.3 711.7 C515.8 711.7 520.3 711.7 524.8 711.7 C526.3 711.7 527.7 715.3 529.2 717.8 C530.7 720.3 532.2 724.5 533.7 726.8 C535.2 729.0 536.7 730.2 538.2 731.3 C543.4 735.0 548.7 738.0 553.9 738.0 C556.9 738.0 559.9 734.6 562.9 734.6 C566.6 734.6 570.4 740.2 574.1 740.2 C576.3 740.2 578.6 735.7 580.8 733.5 C581.5 732.8 582.3 731.8 583.0 731.3 C586.4 729.2 589.7 729.0 593.1 729.0 C595.7 729.0 598.4 729.0 601.0 730.1 C601.4 730.3 601.7 730.9 602.1 731.3 C606.6 736.0 611.1 744.7 615.6 744.7 C620.4 744.7 625.3 732.7 630.1 731.3 C634.2 730.1 638.4 730.1 642.5 730.1 C645.1 730.1 647.7 730.8 650.3 731.3 C652.2 731.7 654.0 732.8 655.9 732.8 C657.4 732.8 658.9 732.1 660.4 731.3 C663.4 729.7 666.4 727.3 669.4 724.5 C672.9 721.2 676.5 716.3 680.0 712.6 C683.0 709.4 686.0 706.7 689.0 703.7 C692.0 700.7 694.9 696.9 697.9 694.7 C701.6 691.9 705.4 690.6 709.1 689.1 C712.9 687.6 716.6 686.9 720.4 685.7 C723.4 684.8 726.3 684.3 729.3 682.8 C732.3 681.3 735.3 679.3 738.3 676.8 C741.3 674.3 744.3 670.1 747.3 667.8 C750.3 665.6 753.2 664.7 756.2 663.3 C760.7 661.2 765.2 660.2 769.7 657.7 C773.4 655.6 777.2 652.7 780.9 649.9 C784.6 647.1 788.4 643.1 792.1 640.9 C795.1 639.1 798.1 638.3 801.1 637.5 C805.6 636.3 810.0 636.8 814.5 635.3 C817.5 634.3 820.5 632.4 823.5 630.8 C825.7 629.6 828.0 627.8 830.2 627.0 C833.2 625.9 836.2 626.7 839.2 625.2 C841.8 623.9 844.4 619.7 847.0 618.5 C848.5 617.8 850.0 617.8 851.5 617.8 C854.1 617.8 856.8 620.4 859.4 620.7 C862.8 621.1 866.1 621.0 869.5 621.8 C870.4 622.0 871.3 621.8 872.2 625.2 C873.0 628.1 873.7 633.5 874.5 645.4 C875.1 654.8 875.7 674.4 876.3 685.7 C877.0 699.5 877.8 712.7 878.5 719.4 C879.0 724.3 879.6 724.3 880.1 724.3 C880.8 724.3 881.6 719.8 882.3 717.1 C883.8 711.7 885.3 703.4 886.8 699.2 C888.7 693.9 890.5 691.1 892.4 689.8 C894.6 688.2 896.9 689.3 899.1 686.9 C900.6 685.3 902.1 680.0 903.6 674.5 C904.7 670.3 905.9 662.3 907.0 658.8 C908.9 653.0 910.7 651.8 912.6 649.9 C914.5 648.0 916.3 647.2 918.2 647.2 C920.1 647.2 921.9 647.2 923.8 648.3 C925.3 649.2 926.8 658.5 928.3 660.0 C929.8 661.5 931.3 661.5 932.8 661.5 C935.8 661.5 938.7 661.5 941.7 661.1 C943.2 660.9 944.7 661.1 946.2 656.6 C947.3 653.2 948.5 642.9 949.6 638.7 C951.5 631.7 953.3 629.0 955.2 626.3 C957.4 623.1 959.7 621.8 961.9 621.8 C965.3 621.8 968.6 625.9 972.0 625.9 C975.4 625.9 978.7 622.3 982.1 622.3 C984.0 622.3 985.8 624.6 987.7 626.3 C990.3 628.7 993.0 632.5 995.6 635.3 C997.8 637.7 1000.1 638.4 1002.3 642.0 C1003.8 644.4 1005.3 647.8 1006.8 652.1 C1008.3 656.4 1009.8 663.7 1011.3 667.8 C1013.5 673.9 1015.8 677.8 1018.0 681.3 C1021.0 686.0 1024.0 689.2 1027.0 691.3 C1030.7 693.9 1034.5 693.8 1038.2 694.3 C1041.2 694.7 1044.1 694.7 1047.1 694.7 C1049.4 694.7 1051.6 689.3 1053.9 686.9 C1056.9 683.7 1059.8 680.2 1062.8 677.9 C1064.1 676.9 1065.4 676.0 1066.7 675.7 C1069.0 675.2 1071.2 675.2 1073.5 675.2 C1076.5 675.2 1079.4 678.6 1082.4 679.5 C1086.1 680.6 1089.9 680.8 1093.6 680.8 C1097.3 680.8 1101.1 679.0 1104.8 679.0 C1107.8 679.0 1110.8 679.0 1113.8 680.1 C1116.0 680.9 1118.3 684.0 1120.5 685.7 C1124.2 688.6 1128.0 693.6 1131.7 693.6 C1137.3 693.6 1143.0 693.6 1148.6 693.6 C1151.2 693.6 1153.8 687.1 1156.4 683.5 C1158.6 680.4 1160.9 674.1 1163.1 673.4 C1168.3 671.8 1173.6 672.1 1178.8 671.8 C1181.8 671.6 1184.8 670.0 1187.8 670.0 C1189.7 670.0 1191.5 672.3 1193.4 673.0 C1205.6 677.4 1217.8 680.0 1230.0 680.0 C1253.3 680.0 1276.7 680.0 1300.0 680.0 C1318.3 680.0 1336.7 679.6 1355.0 672.0 C1357.2 671.1 1359.4 672.0 1361.6 660.0 C1363.0 652.6 1364.3 625.4 1365.7 620.7 C1367.0 616.1 1368.4 616.1 1369.7 616.1 C1371.9 616.1 1374.2 618.7 1376.4 619.4 C1380.9 620.9 1385.4 621.2 1389.9 621.5 C1397.1 622.0 1404.2 622.0 1411.4 622.0 C1419.5 622.0 1427.5 622.0 1435.6 622.0 C1437.7 622.0 1439.7 622.0 1441.8 622.0" fill="none" stroke="#e84a50" stroke-width="1.6"/></g><line x1="1441.8" y1="622" x2="1441.8" y2="731.3" stroke="#58b89c" stroke-width="1.2"/><path d="M124.6 688.0 C128.0 685.8 131.3 681.8 134.7 681.3 C138.8 680.7 142.9 681.2 147.0 680.0 C149.2 679.4 151.5 671.3 153.7 670.7 C157.8 669.6 161.9 669.9 166.0 669.6 C169.8 669.3 173.5 666.9 177.3 666.0 C182.5 664.8 187.8 663.8 193.0 663.8 C195.2 663.8 197.5 663.8 199.7 664.0 C204.9 664.5 210.2 671.2 215.4 671.2 C221.7 671.2 228.1 664.9 234.4 664.9 C244.5 664.9 254.6 664.9 264.7 664.9 C266.6 664.9 268.4 665.1 270.3 665.1 C272.5 665.1 274.8 662.6 277.0 662.6 C280.3 662.6 283.7 666.7 287.0 666.7 C294.7 666.7 302.3 664.4 310.0 664.4 C313.4 664.4 316.8 664.4 320.2 664.4 C322.4 664.4 324.7 673.1 326.9 673.4 C331.4 674.1 335.9 674.1 340.4 674.1 C343.4 674.1 346.3 670.0 349.3 669.6 C354.5 668.9 359.8 668.9 365.0 668.9 C368.7 668.9 372.5 672.5 376.2 674.5 C379.9 676.5 383.7 680.6 387.4 680.6 C389.3 680.6 391.1 680.6 393.0 680.1 C395.6 679.4 398.3 675.7 400.9 673.9 C405.4 670.8 409.8 667.7 414.3 665.6 C418.8 663.5 423.3 661.1 427.8 661.1 C431.5 661.1 435.3 662.2 439.0 662.2 C442.7 662.2 446.5 657.0 450.2 657.0 C453.9 657.0 457.7 662.2 461.4 662.2 C466.6 662.2 471.9 658.0 477.1 656.6 C480.8 655.6 484.6 655.3 488.3 654.8 C496.3 653.6 504.4 651.7 512.4 651.7 C522.1 651.7 531.9 651.7 541.6 651.7 C545.7 651.7 549.8 649.0 553.9 649.0 C558.0 649.0 562.1 651.0 566.2 651.0 C569.2 651.0 572.2 649.0 575.2 647.2 C578.2 645.4 581.2 641.8 584.2 640.4 C587.2 639.0 590.1 638.9 593.1 638.9 C596.8 638.9 600.6 641.1 604.3 641.1 C608.1 641.1 611.8 638.2 615.6 638.2 C618.6 638.2 621.5 638.2 624.5 638.2 C627.9 638.2 631.2 637.1 634.6 637.1 C637.6 637.1 640.6 642.7 643.6 642.7 C647.7 642.7 651.8 642.0 655.9 642.0 C658.5 642.0 661.2 647.2 663.8 647.2 C667.9 647.2 672.0 646.1 676.1 646.1 C679.6 646.1 683.2 649.2 686.7 649.2 C689.7 649.2 692.7 646.5 695.7 646.5 C700.9 646.5 706.2 646.5 711.4 647.0 C714.4 647.3 717.4 648.1 720.4 649.9 C722.3 651.0 724.1 654.2 726.0 654.8 C729.4 655.9 732.7 655.9 736.1 655.9 C740.6 655.9 745.0 655.9 749.5 655.9 C752.5 655.9 755.5 660.4 758.5 662.2 C760.7 663.5 763.0 665.4 765.2 665.6 C770.4 666.0 775.7 666.0 780.9 666.0 C783.1 666.0 785.4 662.6 787.6 662.6 C790.6 662.6 793.6 662.9 796.6 663.3 C804.1 664.3 811.5 667.4 819.0 667.4 C825.0 667.4 831.0 663.7 837.0 663.3 C842.2 663.0 847.4 663.1 852.6 662.9 C857.1 662.7 861.6 660.6 866.1 660.6 C870.4 660.6 874.7 660.8 879.0 662.2 C882.7 663.4 886.5 667.2 890.2 668.3 C894.7 669.6 899.1 669.6 903.6 669.6 C908.8 669.6 914.1 665.6 919.3 665.6 C921.5 665.6 923.8 665.6 926.0 666.0 C930.5 666.8 935.0 670.5 939.5 670.5 C946.2 670.5 953.0 667.8 959.7 667.8 C963.4 667.8 967.2 668.9 970.9 668.9 C979.1 668.9 987.4 668.9 995.6 668.9 C998.6 668.9 1001.5 664.0 1004.5 662.6 C1007.5 661.2 1010.5 660.7 1013.5 660.6 C1021.0 660.4 1028.4 660.4 1035.9 660.4 C1038.9 660.4 1041.9 663.3 1044.9 663.3 C1047.9 663.3 1050.9 659.9 1053.9 658.8 C1056.9 657.8 1059.8 658.2 1062.8 657.0 C1066.0 655.7 1069.1 651.2 1072.3 651.0 C1077.9 650.6 1083.5 650.7 1089.1 650.5 C1093.6 650.3 1098.1 645.8 1102.6 645.8 C1109.3 645.8 1116.1 646.6 1122.8 647.0 C1128.8 647.4 1134.7 647.3 1140.7 648.1 C1145.2 648.7 1149.7 650.6 1154.2 651.0 C1158.7 651.4 1163.1 651.1 1167.6 652.1 C1170.2 652.7 1172.9 658.2 1175.5 658.2 C1178.9 658.2 1182.2 657.5 1185.6 656.6 C1190.1 655.4 1194.5 653.2 1199.0 651.7 C1205.0 649.7 1211.0 648.4 1217.0 646.5 C1221.5 645.1 1225.9 643.0 1230.4 642.0 C1234.9 640.9 1239.4 640.2 1243.9 640.2 C1249.5 640.2 1255.2 640.2 1260.8 640.9 C1263.5 641.2 1266.1 643.6 1268.8 643.6 C1271.5 643.6 1274.2 640.4 1276.9 640.4 C1280.5 640.4 1284.1 641.7 1287.7 641.7 C1292.2 641.7 1296.6 641.7 1301.1 641.7 C1305.6 641.7 1310.1 636.6 1314.6 635.5 C1320.0 634.2 1325.3 634.2 1330.7 634.2 C1333.4 634.2 1336.1 638.2 1338.8 638.2 C1344.2 638.2 1349.6 637.0 1355.0 636.3 C1360.3 635.6 1365.7 634.2 1371.0 634.2 C1374.6 634.2 1378.2 638.9 1381.8 640.9 C1386.3 643.4 1390.8 645.7 1395.3 647.6 C1398.0 648.7 1400.7 650.3 1403.4 650.3 C1406.1 650.3 1408.7 644.9 1411.4 644.9 C1416.8 644.9 1422.2 644.9 1427.6 644.9 C1432.3 644.9 1437.1 647.1 1441.8 648.2" fill="none" stroke="#d9b04e" stroke-width="1.5"/><line x1="126" y1="637" x2="1452" y2="637" stroke="rgba(0,0,0,0.28)" stroke-width="4.2" stroke-dasharray="4.7 1.8"/><line x1="119" y1="637" x2="1452" y2="637" stroke="rgba(255,255,255,0.68)" stroke-width="1.8" stroke-dasharray="4.7 1.8" stroke-dashoffset="-0.6"/><line x1="1442.5" y1="549" x2="1442.5" y2="790" stroke="rgba(255,255,255,0.62)" stroke-width="1" stroke-dasharray="4 3"/><circle cx="1442.2" cy="622.3" r="4.4" fill="#fff" stroke="#58b89c" stroke-width="2.4"/><circle cx="1442.2" cy="648.3" r="4.4" fill="#fff" stroke="#d9b04e" stroke-width="2.4"/><clipPath id="csel"><rect x="1151.8" y="789.6" width="298.4" height="66.5"/></clipPath><rect x="1151.8" y="789.6" width="298.4" height="66.5" fill="#080c19"/><path d="M122.3 836.1 L129.3 835.7 L137.1 837.7 L146.9 840.8 L162.5 838.4 L170.3 838.4 L178.1 841.2 L193.8 837.7 L205.5 837.7 L219.1 838.8 L232.8 841.6 L250.4 838.0 L256.2 839.6 L268.0 838.4 L275.8 834.5 L285.5 834.1 L293.4 836.1 L303.1 836.5 L314.8 833.0 L326.6 833.0 L334.4 829.0 L344.1 828.3 L353.9 831.4 L365.6 830.6 L373.4 831.4 L385.2 833.4 L396.9 838.8 L408.6 835.7 L424.2 836.1 L435.9 834.1 L443.8 835.7 L455.5 831.0 L465.2 833.0 L475.0 830.2 L486.7 829.5 L494.5 826.7 L506.2 829.0 L516.0 829.5 L523.8 827.5 L533.6 829.8 L549.2 830.2 L560.9 831.8 L574.6 833.0 L580.5 829.8 L588.3 833.0 L603.9 835.3 L615.6 835.7 L623.4 834.5 L635.2 838.0 L646.9 838.8 L658.6 839.6 L674.2 838.4 L682.0 840.8 L690.0 839.1 L694.7 839.7 L704.1 842.2 L713.4 840.6 L719.7 843.1 L727.5 839.1 L732.2 835.3 L738.4 836.6 L741.6 834.4 L747.8 833.4 L754.1 835.9 L763.4 835.0 L772.8 834.4 L780.6 833.4 L786.9 837.5 L796.2 839.7 L802.5 842.2 L815.0 841.2 L824.4 843.1 L833.8 843.1 L849.4 840.6 L855.6 839.7 L868.1 841.2 L877.5 840.0 L888.4 842.2 L897.8 836.9 L905.6 838.1 L911.9 835.9 L918.1 836.9 L922.8 831.2 L930.6 837.5 L936.9 833.4 L947.8 830.6 L955.6 833.4 L961.9 831.9 L972.8 830.6 L983.8 832.2 L996.2 832.5 L1005.6 834.4 L1015.0 831.2 L1022.8 833.4 L1027.5 831.2 L1036.9 832.2 L1046.2 831.2 L1055.6 829.7 L1065.0 831.2 L1074.4 833.4 L1080.6 840.0 L1086.9 841.2 L1096.2 839.7 L1105.6 833.1 L1115.0 832.8 L1124.4 833.4 L1133.8 830.6 L1136.6 828.2 L1138.9 823.3 L1142.2 825.5 L1145.5 822.7 L1159.9 817.1 L1167.6 815.4 L1173.2 817.8 L1177.6 815.6 L1185.3 814.9 L1188.7 816.5 L1196.4 815.6 L1199.7 818.9 L1204.1 817.1 L1207.5 817.8 L1211.9 822.0 L1218.5 815.6 L1223.0 814.5 L1226.3 812.7 L1229.6 814.3 L1236.2 810.9 L1245.1 809.8 L1250.6 809.4 L1256.2 805.0 L1262.8 804.3 L1267.2 803.9 L1273.9 807.2 L1280.5 807.8 L1284.9 807.6 L1293.8 811.6 L1300.4 816.0 L1307.1 814.9 L1309.3 816.7 L1320.4 813.8 L1324.8 817.1 L1331.4 816.0 L1336.9 817.6 L1349.1 816.5 L1353.5 813.8 L1360.2 814.3 L1366.8 810.5 L1373.5 807.6 L1382.3 808.7 L1390.1 812.3 L1397.8 808.3 L1404.5 805.4 L1408.9 805.0 L1412.2 806.5 L1417.7 805.0 L1423.3 802.7 L1426.6 803.9 L1433.2 802.7 L1439.9 808.7 L1444.3 806.5 L1449.8 808.7 L1449.8 856 L122.3 856 Z" fill="#0b0f1c"/><path d="M122.3 836.1 L129.3 835.7 L137.1 837.7 L146.9 840.8 L162.5 838.4 L170.3 838.4 L178.1 841.2 L193.8 837.7 L205.5 837.7 L219.1 838.8 L232.8 841.6 L250.4 838.0 L256.2 839.6 L268.0 838.4 L275.8 834.5 L285.5 834.1 L293.4 836.1 L303.1 836.5 L314.8 833.0 L326.6 833.0 L334.4 829.0 L344.1 828.3 L353.9 831.4 L365.6 830.6 L373.4 831.4 L385.2 833.4 L396.9 838.8 L408.6 835.7 L424.2 836.1 L435.9 834.1 L443.8 835.7 L455.5 831.0 L465.2 833.0 L475.0 830.2 L486.7 829.5 L494.5 826.7 L506.2 829.0 L516.0 829.5 L523.8 827.5 L533.6 829.8 L549.2 830.2 L560.9 831.8 L574.6 833.0 L580.5 829.8 L588.3 833.0 L603.9 835.3 L615.6 835.7 L623.4 834.5 L635.2 838.0 L646.9 838.8 L658.6 839.6 L674.2 838.4 L682.0 840.8 L690.0 839.1 L694.7 839.7 L704.1 842.2 L713.4 840.6 L719.7 843.1 L727.5 839.1 L732.2 835.3 L738.4 836.6 L741.6 834.4 L747.8 833.4 L754.1 835.9 L763.4 835.0 L772.8 834.4 L780.6 833.4 L786.9 837.5 L796.2 839.7 L802.5 842.2 L815.0 841.2 L824.4 843.1 L833.8 843.1 L849.4 840.6 L855.6 839.7 L868.1 841.2 L877.5 840.0 L888.4 842.2 L897.8 836.9 L905.6 838.1 L911.9 835.9 L918.1 836.9 L922.8 831.2 L930.6 837.5 L936.9 833.4 L947.8 830.6 L955.6 833.4 L961.9 831.9 L972.8 830.6 L983.8 832.2 L996.2 832.5 L1005.6 834.4 L1015.0 831.2 L1022.8 833.4 L1027.5 831.2 L1036.9 832.2 L1046.2 831.2 L1055.6 829.7 L1065.0 831.2 L1074.4 833.4 L1080.6 840.0 L1086.9 841.2 L1096.2 839.7 L1105.6 833.1 L1115.0 832.8 L1124.4 833.4 L1133.8 830.6 L1136.6 828.2 L1138.9 823.3 L1142.2 825.5 L1145.5 822.7 L1159.9 817.1 L1167.6 815.4 L1173.2 817.8 L1177.6 815.6 L1185.3 814.9 L1188.7 816.5 L1196.4 815.6 L1199.7 818.9 L1204.1 817.1 L1207.5 817.8 L1211.9 822.0 L1218.5 815.6 L1223.0 814.5 L1226.3 812.7 L1229.6 814.3 L1236.2 810.9 L1245.1 809.8 L1250.6 809.4 L1256.2 805.0 L1262.8 804.3 L1267.2 803.9 L1273.9 807.2 L1280.5 807.8 L1284.9 807.6 L1293.8 811.6 L1300.4 816.0 L1307.1 814.9 L1309.3 816.7 L1320.4 813.8 L1324.8 817.1 L1331.4 816.0 L1336.9 817.6 L1349.1 816.5 L1353.5 813.8 L1360.2 814.3 L1366.8 810.5 L1373.5 807.6 L1382.3 808.7 L1390.1 812.3 L1397.8 808.3 L1404.5 805.4 L1408.9 805.0 L1412.2 806.5 L1417.7 805.0 L1423.3 802.7 L1426.6 803.9 L1433.2 802.7 L1439.9 808.7 L1444.3 806.5 L1449.8 808.7 L1449.8 856 L122.3 856 Z" fill="#1f2641" clip-path="url(#csel)"/><path d="M122.3 836.1 L129.3 835.7 L137.1 837.7 L146.9 840.8 L162.5 838.4 L170.3 838.4 L178.1 841.2 L193.8 837.7 L205.5 837.7 L219.1 838.8 L232.8 841.6 L250.4 838.0 L256.2 839.6 L268.0 838.4 L275.8 834.5 L285.5 834.1 L293.4 836.1 L303.1 836.5 L314.8 833.0 L326.6 833.0 L334.4 829.0 L344.1 828.3 L353.9 831.4 L365.6 830.6 L373.4 831.4 L385.2 833.4 L396.9 838.8 L408.6 835.7 L424.2 836.1 L435.9 834.1 L443.8 835.7 L455.5 831.0 L465.2 833.0 L475.0 830.2 L486.7 829.5 L494.5 826.7 L506.2 829.0 L516.0 829.5 L523.8 827.5 L533.6 829.8 L549.2 830.2 L560.9 831.8 L574.6 833.0 L580.5 829.8 L588.3 833.0 L603.9 835.3 L615.6 835.7 L623.4 834.5 L635.2 838.0 L646.9 838.8 L658.6 839.6 L674.2 838.4 L682.0 840.8 L690.0 839.1 L694.7 839.7 L704.1 842.2 L713.4 840.6 L719.7 843.1 L727.5 839.1 L732.2 835.3 L738.4 836.6 L741.6 834.4 L747.8 833.4 L754.1 835.9 L763.4 835.0 L772.8 834.4 L780.6 833.4 L786.9 837.5 L796.2 839.7 L802.5 842.2 L815.0 841.2 L824.4 843.1 L833.8 843.1 L849.4 840.6 L855.6 839.7 L868.1 841.2 L877.5 840.0 L888.4 842.2 L897.8 836.9 L905.6 838.1 L911.9 835.9 L918.1 836.9 L922.8 831.2 L930.6 837.5 L936.9 833.4 L947.8 830.6 L955.6 833.4 L961.9 831.9 L972.8 830.6 L983.8 832.2 L996.2 832.5 L1005.6 834.4 L1015.0 831.2 L1022.8 833.4 L1027.5 831.2 L1036.9 832.2 L1046.2 831.2 L1055.6 829.7 L1065.0 831.2 L1074.4 833.4 L1080.6 840.0 L1086.9 841.2 L1096.2 839.7 L1105.6 833.1 L1115.0 832.8 L1124.4 833.4 L1133.8 830.6 L1136.6 828.2 L1138.9 823.3 L1142.2 825.5 L1145.5 822.7 L1159.9 817.1 L1167.6 815.4 L1173.2 817.8 L1177.6 815.6 L1185.3 814.9 L1188.7 816.5 L1196.4 815.6 L1199.7 818.9 L1204.1 817.1 L1207.5 817.8 L1211.9 822.0 L1218.5 815.6 L1223.0 814.5 L1226.3 812.7 L1229.6 814.3 L1236.2 810.9 L1245.1 809.8 L1250.6 809.4 L1256.2 805.0 L1262.8 804.3 L1267.2 803.9 L1273.9 807.2 L1280.5 807.8 L1284.9 807.6 L1293.8 811.6 L1300.4 816.0 L1307.1 814.9 L1309.3 816.7 L1320.4 813.8 L1324.8 817.1 L1331.4 816.0 L1336.9 817.6 L1349.1 816.5 L1353.5 813.8 L1360.2 814.3 L1366.8 810.5 L1373.5 807.6 L1382.3 808.7 L1390.1 812.3 L1397.8 808.3 L1404.5 805.4 L1408.9 805.0 L1412.2 806.5 L1417.7 805.0 L1423.3 802.7 L1426.6 803.9 L1433.2 802.7 L1439.9 808.7 L1444.3 806.5 L1449.8 808.7" fill="none" stroke="#3a5596" stroke-width="1.2"/></svg>
<div style="position:absolute;left:1144.9px;top:815px;width:16px;height:19px;background:#3b3d42;border-radius:6px;"></div>
<div style="position:absolute;left:1150.1px;top:821.6px;width:1.8px;height:6.3px;background:#a9abaf"></div><div style="position:absolute;left:1154.0px;top:821.6px;width:1.8px;height:6.3px;background:#a9abaf"></div>
<div style="position:absolute;left:1441.2px;top:815px;width:16px;height:19px;background:#3b3d42;border-radius:6px;"></div>
<div style="position:absolute;left:1446.4px;top:821.6px;width:1.8px;height:6.3px;background:#a9abaf"></div><div style="position:absolute;left:1450.3px;top:821.6px;width:1.8px;height:6.3px;background:#a9abaf"></div>
<div class="t" style="top:543.5px;font-size:12px;color:#b4b7bc;letter-spacing:0.121px;right:1425.9px;text-align:right;"><span>0.0100%</span></div>
<div class="t" style="top:579.9px;font-size:12px;color:#b4b7bc;letter-spacing:0.121px;right:1425.9px;text-align:right;"><span>0.0080%</span></div>
<div class="t" style="top:616.2px;font-size:12px;color:#b4b7bc;letter-spacing:0.121px;right:1425.9px;text-align:right;"><span>0.0060%</span></div>
<div class="t" style="top:652.6px;font-size:12px;color:#b4b7bc;letter-spacing:0.121px;right:1425.9px;text-align:right;"><span>0.0040%</span></div>
<div class="t" style="top:689.0px;font-size:12px;color:#b4b7bc;letter-spacing:0.121px;right:1425.9px;text-align:right;"><span>0.0020%</span></div>
<div class="t" style="top:725.4px;font-size:12px;color:#b4b7bc;letter-spacing:-1.144px;right:1427.1px;text-align:right;"><span>0%</span></div>
<div class="t" style="top:761.7px;font-size:12px;color:#b4b7bc;letter-spacing:0.246px;right:1425.8px;text-align:right;"><span>-0.0020%</span></div>
<div class="t" style="top:542.2px;font-size:12px;color:#b4b7bc;letter-spacing:0.268px;left:1457.0px;"><span>$0.3738</span></div>
<div class="t" style="top:576.9px;font-size:12px;color:#b4b7bc;letter-spacing:0.268px;left:1457.0px;"><span>$0.3600</span></div>
<div class="t" style="top:627.2px;font-size:12px;color:#b4b7bc;letter-spacing:0.268px;left:1457.0px;"><span>$0.3400</span></div>
<div class="t" style="top:677.6px;font-size:12px;color:#b4b7bc;letter-spacing:0.268px;left:1457.0px;"><span>$0.3200</span></div>
<div class="t" style="top:728.0px;font-size:12px;color:#b4b7bc;letter-spacing:0.268px;left:1457.0px;"><span>$0.3000</span></div>
<div class="t" style="top:761.2px;font-size:12px;color:#b4b7bc;letter-spacing:0.268px;left:1457.0px;"><span>$0.2868</span></div>
<div class="t" style="top:777.0px;font-size:12px;color:#b4b7bc;letter-spacing:0.294px;left:-4.9px;width:300px;text-align:center;"><span>03, 03:35</span></div>
<div class="t" style="top:777.0px;font-size:12px;color:#b4b7bc;letter-spacing:0.294px;left:66.6px;width:300px;text-align:center;"><span>03, 04:10</span></div>
<div class="t" style="top:777.0px;font-size:12px;color:#b4b7bc;letter-spacing:0.294px;left:138.0px;width:300px;text-align:center;"><span>03, 04:45</span></div>
<div class="t" style="top:777.0px;font-size:12px;color:#b4b7bc;letter-spacing:0.294px;left:209.5px;width:300px;text-align:center;"><span>03, 05:20</span></div>
<div class="t" style="top:777.0px;font-size:12px;color:#b4b7bc;letter-spacing:0.294px;left:280.9px;width:300px;text-align:center;"><span>03, 05:55</span></div>
<div class="t" style="top:777.0px;font-size:12px;color:#b4b7bc;letter-spacing:0.294px;left:352.4px;width:300px;text-align:center;"><span>03, 06:30</span></div>
<div class="t" style="top:777.0px;font-size:12px;color:#b4b7bc;letter-spacing:0.294px;left:423.8px;width:300px;text-align:center;"><span>03, 07:05</span></div>
<div class="t" style="top:777.0px;font-size:12px;color:#b4b7bc;letter-spacing:0.294px;left:495.3px;width:300px;text-align:center;"><span>03, 07:40</span></div>
<div class="t" style="top:777.0px;font-size:12px;color:#b4b7bc;letter-spacing:0.294px;left:566.7px;width:300px;text-align:center;"><span>03, 08:15</span></div>
<div class="t" style="top:777.0px;font-size:12px;color:#b4b7bc;letter-spacing:0.294px;left:638.2px;width:300px;text-align:center;"><span>03, 08:50</span></div>
<div class="t" style="top:777.0px;font-size:12px;color:#b4b7bc;letter-spacing:0.294px;left:709.6px;width:300px;text-align:center;"><span>03, 09:25</span></div>
<div class="t" style="top:777.0px;font-size:12px;color:#b4b7bc;letter-spacing:0.294px;left:781.1px;width:300px;text-align:center;"><span>03, 10:00</span></div>
<div class="t" style="top:777.0px;font-size:12px;color:#b4b7bc;letter-spacing:0.294px;left:852.5px;width:300px;text-align:center;"><span>03, 10:35</span></div>
<div class="t" style="top:777.0px;font-size:12px;color:#b4b7bc;letter-spacing:0.405px;left:924.1px;width:300px;text-align:center;"><span>03, 11:10</span></div>
<div class="t" style="top:777.0px;font-size:12px;color:#b4b7bc;letter-spacing:0.405px;left:995.5px;width:300px;text-align:center;"><span>03, 11:45</span></div>
<div class="t" style="top:777.0px;font-size:12px;color:#b4b7bc;letter-spacing:0.294px;left:1066.9px;width:300px;text-align:center;"><span>03, 12:20</span></div>
<div class="t" style="top:777.0px;font-size:12px;color:#b4b7bc;letter-spacing:0.294px;left:1138.3px;width:300px;text-align:center;"><span>03, 12:55</span></div>
<div class="t" style="top:777.0px;font-size:12px;color:#b4b7bc;letter-spacing:0.294px;left:1209.8px;width:300px;text-align:center;"><span>03, 13:30</span></div>
<div style="position:absolute;left:76px;top:624.5px;width:40px;height:23.5px;background:#000;border-radius:3px"></div>
<div class="t" style="top:628.7px;font-size:13px;color:#fff;right:1429.5px;text-align:right;"><span>0.01</span></div>
<div style="position:absolute;left:1452px;top:624.7px;width:38px;height:23px;background:#000;border-radius:3px"></div>
<div class="t" style="top:628.7px;font-size:13px;color:#fff;left:1459.0px;"><span>0.34</span></div>
<div style="position:absolute;left:1383.7px;top:773.7px;width:117px;height:21.4px;background:#000;border-radius:4px"></div>
<div class="t" style="top:775.9px;font-size:13px;color:#fff;letter-spacing:-0.156px;left:1391.4px;"><span>3 Jun 2025, 14:10</span></div>
<div class="t" style="top:733.1px;font-size:14px;color:#8e9196;font-weight:700;left:1421.0px;"><span>ss</span></div>
<div style="position:absolute;left:1194px;top:660px;width:225px;height:109px;background:#050609;border-radius:7px;box-shadow:-22px 22px 50px 0px rgba(0,0,0,0.6)"></div>
<div class="t" style="top:680.2px;font-size:16px;color:#f4f5f7;letter-spacing:-0.132px;left:1211.2px;"><span>3 Jun 2025, 14:10</span></div>
<div style="position:absolute;left:1210.5px;top:717.4px;width:7px;height:7px;background:#dcb558;border:2px solid #eef0f2;border-radius:50%"></div>
<div style="position:absolute;left:1210.5px;top:741.4px;width:7px;height:7px;background:#5fb8a0;border:2px solid #eef0f2;border-radius:50%"></div>
<div class="t" style="top:714.7px;font-size:16px;color:#dfe1e5;letter-spacing:-0.115px;left:1226.4px;"><span>ENA Price</span></div>
<div class="t" style="top:738.9px;font-size:16px;color:#dfe1e5;letter-spacing:0.307px;left:1226.4px;"><span>OI-Weighted</span></div>
<div class="t" style="top:714.7px;font-size:16px;color:#f4f5f7;right:133.6px;text-align:right;"><span>$0.33</span></div>
<div class="t" style="top:738.9px;font-size:16px;color:#f4f5f7;letter-spacing:-0.429px;right:134.0px;text-align:right;"><span>0.0060%</span></div>
</body></html>
